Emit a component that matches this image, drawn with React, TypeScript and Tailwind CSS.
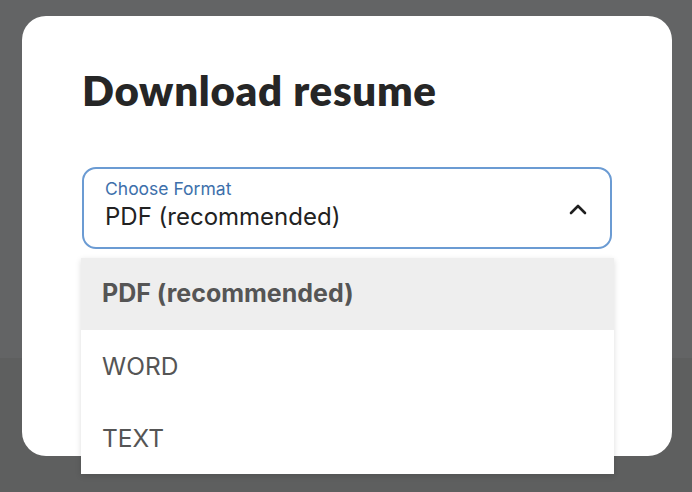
import React from "react";

export default function App() {
  return (
    <div className="relative w-[692px] h-[492px] overflow-hidden flex flex-col">
      <div className="h-[358px] bg-[#636465]"></div>
      <div className="flex-1 bg-[#5e5f5f]"></div>

      <div className="absolute left-[22px] top-[16px] w-[650px] h-[440px] rounded-[24px] bg-white px-[60px] pt-[49px]">
        <h1
          className="text-[42px] leading-[50px] font-extrabold text-[#262626] tracking-[0.7px]"
          style={{ fontFamily: "Lato, 'Noto Sans', sans-serif" }}
        >
          Download resume
        </h1>

        <div className="relative mt-[52px]" style={{ fontFamily: "Inter, 'Noto Sans', sans-serif" }}>
          <div className="h-[82px] rounded-[14px] border-2 border-[#6b9bd3] flex items-center pl-[21px] pr-[22px]">
            <div className="flex-1 flex flex-col">
              <span className="text-[17.5px] leading-[22px] text-[#3d70ab] mt-[-6px]">Choose Format</span>
              <span className="text-[24px] leading-[30px] text-[#222222] mt-[2px]">PDF (recommended)</span>
            </div>
            <svg width="20" height="14" viewBox="0 0 20 14" className="mt-[2px]">
              <path d="M3 11 L10 4 L17 11" fill="none" stroke="#1f1f1f" strokeWidth="2.6" strokeLinecap="round" strokeLinejoin="round" />
            </svg>
          </div>

          <div className="absolute left-[-1px] right-[-2px] top-[91px] bg-white shadow-[0_2px_6px_rgba(0,0,0,0.14)] z-10 flex flex-col">
            <div className="h-[72px] bg-[#eeeeee] flex items-center pl-[21px] text-[25px] font-bold text-[#555555]">
              PDF (recommended)
            </div>
            <div className="h-[72px] flex items-center pl-[21px] text-[24.5px] text-[#555555]">WORD</div>
            <div className="h-[72px] flex items-center pl-[21px] text-[24.5px] text-[#555555]">TEXT</div>
          </div>
        </div>
      </div>
    </div>
  );
}
